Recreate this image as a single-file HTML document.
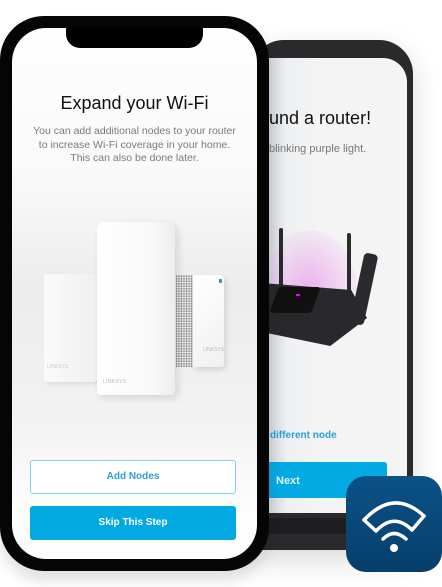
<!DOCTYPE html>
<html><head><meta charset="utf-8"><style>
*{margin:0;padding:0;box-sizing:border-box}
body{width:442px;height:587px;background:#fff;position:relative;overflow:hidden;font-family:"Liberation Sans",sans-serif}
.abs{position:absolute}
</style></head><body>
<!-- back phone -->
<div class="abs" style="left:250px;top:40px;width:163px;height:510px;background:#2a2a2c;border-radius:34px 34px 6px 6px;box-shadow:0 10px 30px rgba(0,0,0,.15)"></div>
<div class="abs" style="left:262px;top:58px;width:145px;height:460px;background:linear-gradient(90deg,#c5c9d0 0,#eef0f2 25px,#f4f4f5 60px);border-radius:0 24px 0 0;overflow:hidden">
  <div class="abs" style="left:7px;top:50px;font-size:18px;color:#111;white-space:nowrap">und a router!</div>
  <div class="abs" style="left:7px;top:85px;font-size:11px;color:#777;white-space:nowrap">blinking purple light.</div>
  <!-- router -->
  <div class="abs" style="left:0;top:172px;width:95px;height:62px;border-radius:50px 50px 0 0;background:radial-gradient(ellipse at 50% 100%,rgba(230,120,230,.55),rgba(240,190,240,.2) 70%,transparent 72%)"></div>
  <div class="abs" style="left:17px;top:170px;width:4px;height:60px;background:#2b2a2e;border-radius:2px"></div>
  <div class="abs" style="left:85px;top:175px;width:4px;height:60px;background:#2b2a2e;border-radius:2px"></div>
  <div class="abs" style="left:95px;top:195px;width:14px;height:72px;background:#2b2a2e;border-radius:4px;transform:rotate(12deg)"></div>
  <div class="abs" style="left:0;top:218px;width:105px;height:70px;background:#29282c;clip-path:polygon(0 10%,85% 20%,100% 60%,65% 100%,0 80%)"></div>
  <div class="abs" style="left:12px;top:229px;width:42px;height:26px;background:#111;transform:skewX(-20deg);border-radius:3px"></div>
  <div class="abs" style="left:34px;top:236px;width:4px;height:2px;background:#e0f"></div>
  <div class="abs" style="left:8px;top:372px;font-size:10px;font-weight:bold;color:#2a9fd6;white-space:nowrap">different node</div>
  <div class="abs" style="left:0;top:404px;width:125px;height:36px;background:#03a9e2;border-radius:3px;color:#dff3fb;font-size:11px;font-weight:bold;padding:13px 0 0 14px">Next</div>
  <div class="abs" style="left:0;top:455px;width:145px;height:5px;background:#2a2a2c"></div>
</div>
<div class="abs" style="left:262px;top:518px;width:145px;height:16px;background:#1e1e20"></div>
<!-- front phone -->
<div class="abs" style="left:0;top:16px;width:269px;height:555px;background:#050505;border-radius:44px;box-shadow:0 10px 14px rgba(0,0,0,.12)"></div>
<div class="abs" style="left:12px;top:28px;width:245px;height:531px;background:linear-gradient(#fefefe 0,#f9f9f9 150px,#ececec 260px,#f3f3f3 400px,#fdfdfd 480px);border-radius:34px;overflow:hidden">
  <div class="abs" style="left:54px;top:0;width:137px;height:20px;background:#000;border-radius:0 0 14px 14px"></div>
  <div class="abs" style="left:0;top:65px;width:245px;text-align:center;font-size:18px;color:#111">Expand your Wi-Fi</div>
  <div class="abs" style="left:0;top:97px;width:245px;text-align:center;font-size:10.5px;line-height:13.5px;color:#7a7a7a">You can add additional nodes to your router<br>to increase Wi-Fi coverage in your home.<br>This can also be done later.</div>
  <!-- nodes -->
  <div class="abs" style="left:32px;top:246px;width:53px;height:108px;background:linear-gradient(90deg,#fafafa,#f0f0f0);border-radius:3px;box-shadow:2px 2px 4px rgba(0,0,0,.1)"></div>
  <div class="abs" style="left:35px;top:336px;font-size:5px;color:#ccc">LINKSYS</div>
  <div class="abs" style="left:164px;top:247px;width:18px;height:92px;background:repeating-linear-gradient(90deg,#999 0 1px,#eee 1px 2.5px),#ddd;background-blend-mode:multiply"></div>
  <div class="abs" style="left:164px;top:247px;width:18px;height:92px;background:repeating-linear-gradient(0deg,transparent 0 1.5px,rgba(255,255,255,.6) 1.5px 2.5px)"></div>
  <div class="abs" style="left:181px;top:247px;width:31px;height:92px;background:linear-gradient(135deg,#fff,#f0f0f0);border-radius:0 3px 3px 0;box-shadow:2px 3px 6px rgba(0,0,0,.12)"></div>
  <div class="abs" style="left:207px;top:251px;width:3px;height:4px;background:#2a8fe6;border-radius:1px"></div>
  <div class="abs" style="left:191px;top:319px;font-size:5px;color:#bbb">LINKSYS</div>
  <div class="abs" style="left:85px;top:194px;width:78px;height:173px;background:linear-gradient(90deg,#fff 0,#f8f8f8 75%,#ececec);border-radius:8px 8px 3px 3px;box-shadow:3px 3px 8px rgba(0,0,0,.12)"></div>
  <div class="abs" style="left:91px;top:351px;font-size:5.5px;color:#bbb">LINKSYS</div>
  <div class="abs" style="left:18px;top:432px;width:206px;height:34px;border:1px solid #7fd0f2;border-radius:3px;background:#fff;text-align:center;line-height:32px;font-size:10px;font-weight:bold;color:#2a9fd6">Add Nodes</div>
  <div class="abs" style="left:18px;top:478px;width:206px;height:34px;background:#03a9e2;border-radius:3px;text-align:center;line-height:34px;font-size:10px;font-weight:bold;color:#fff">Skip This Step</div>
</div>
<!-- app icon -->
<div class="abs" style="left:346px;top:476px;width:96px;height:96px;border-radius:20px;background:linear-gradient(#0b5287,#063e6b)">
  <svg width="96" height="96" viewBox="0 0 96 96" style="position:absolute;left:0;top:0">
    <path d="M18 44 Q48 12 78 40" fill="none" stroke="#fff" stroke-width="3.5" stroke-linecap="round"/>
    <path d="M18 44 L30 55 Q48 36 66 54 L78 40" fill="none" stroke="#fff" stroke-width="3.5" stroke-linejoin="round" stroke-linecap="round"/>
    <path d="M37 63 Q48 52 60 63" fill="none" stroke="#fff" stroke-width="3.5" stroke-linecap="round"/>
    <circle cx="48" cy="72" r="4" fill="#fff"/>
  </svg>
</div>
</body></html>
